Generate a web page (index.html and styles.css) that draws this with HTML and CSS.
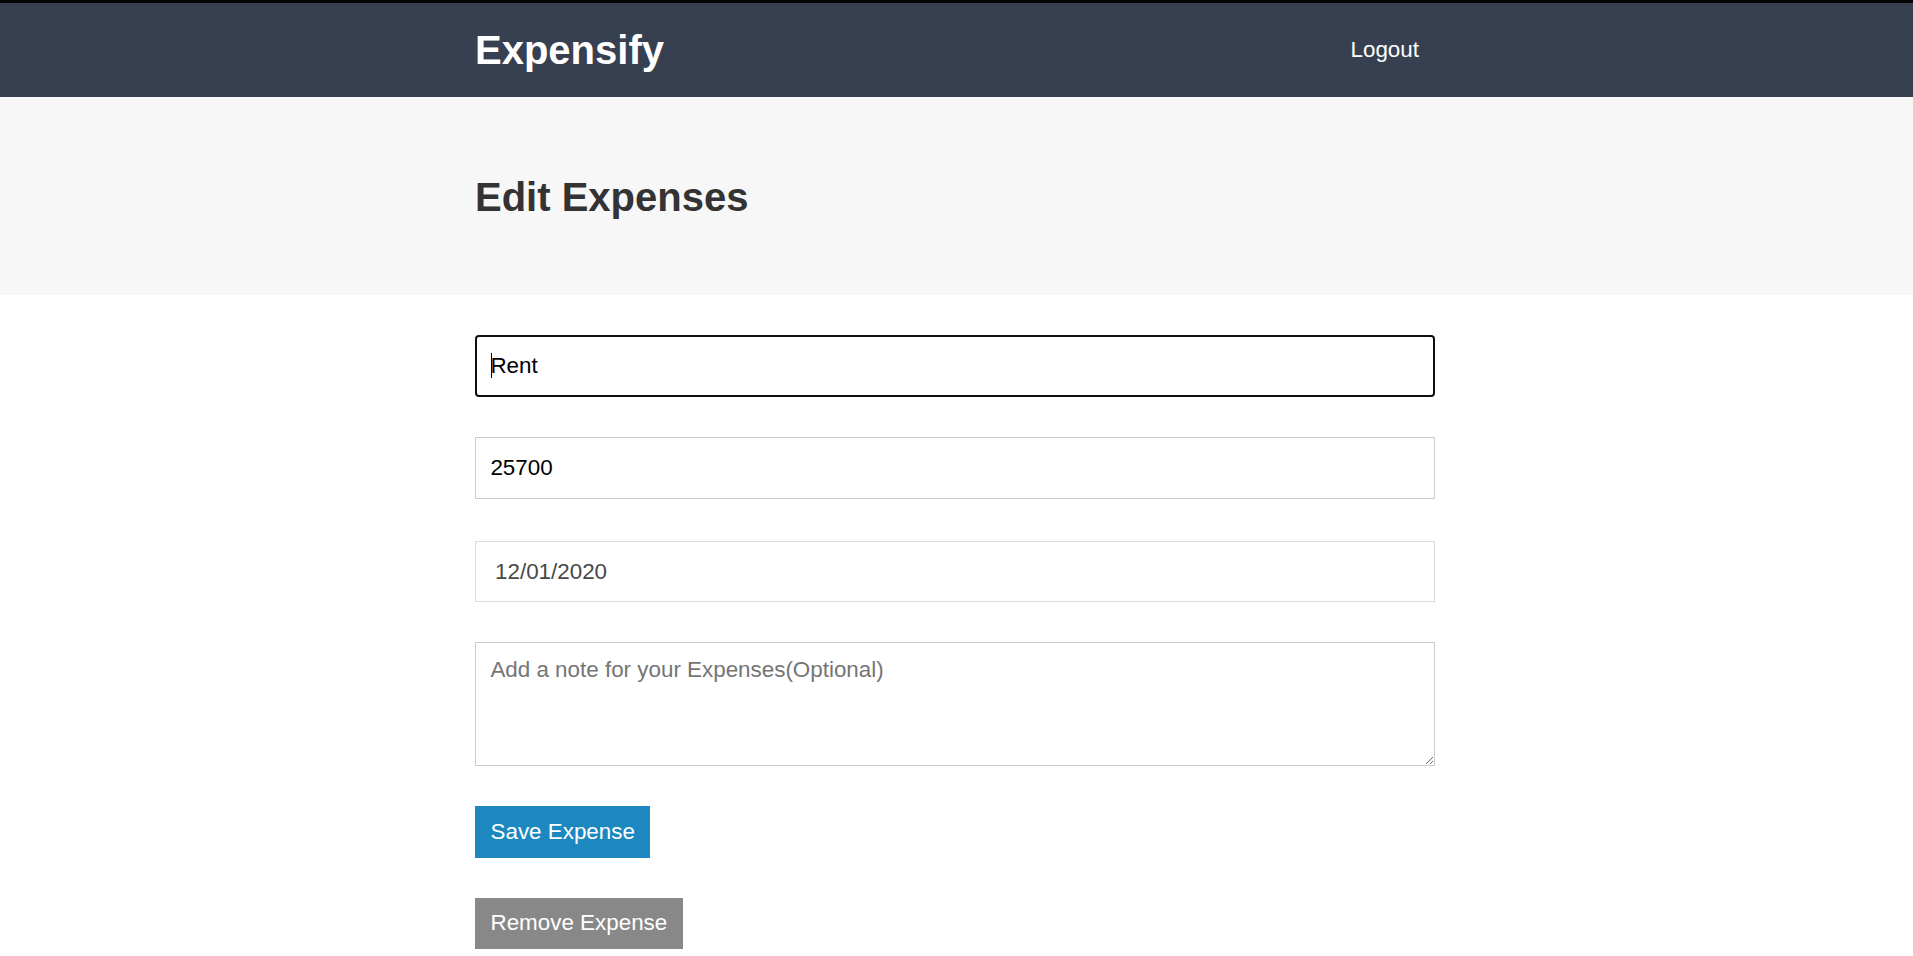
FILE: index.html
```html
<!DOCTYPE html>
<html lang="en">
<head>
<meta charset="utf-8">
<title>Expensify</title>
<link rel="stylesheet" href="styles.css">
</head>
<body>
<header class="header">
  <div class="container header__content">
    <a class="header__title" href="#"><h1>Expensify</h1></a>
    <button class="button-link" type="button">Logout</button>
  </div>
</header>
<div class="page-header">
  <div class="container">
    <h1 class="page-header__title">Edit Expenses</h1>
  </div>
</div>
<div class="container">
  <form class="form">
    <div class="field">
      <input class="text-input text-input--focused" type="text" placeholder="Description" value="Rent">
      <span class="caret"></span>
    </div>
    <input class="text-input" type="text" placeholder="Amount" value="25700">
    <div class="date-picker">
      <input class="date-picker__input" type="text" value="12/01/2020">
    </div>
    <textarea class="textarea" placeholder="Add a note for your Expenses(Optional)"></textarea>
    <div class="form__row">
      <button class="button" type="button">Save Expense</button>
    </div>
    <div class="form__row">
      <button class="button button--secondary" type="button">Remove Expense</button>
    </div>
  </form>
</div>
</body>
</html>
```
FILE: styles.css
```css
* {
  box-sizing: border-box;
}

html, body {
  margin: 0;
  padding: 0;
}

body {
  font-family: "Liberation Sans", Arial, sans-serif;
  color: #333333;
  background: #ffffff;
}

.container {
  width: 960px;
  margin-left: calc(50% - 481.5px);
  margin-right: auto;
}

.header {
  background: #364051;
  border-top: 3px solid #050505;
}

.header__content {
  height: 94px;
  display: flex;
  align-items: center;
  justify-content: space-between;
}

.header__title {
  color: #ffffff;
  text-decoration: none;
}

.header__title h1 {
  margin: 0;
  font-size: 40px;
  font-weight: 700;
  line-height: 46px;
}

.button-link {
  background: none;
  border: none;
  color: #ffffff;
  font-family: inherit;
  font-size: 22.4px;
  line-height: 1;
  padding: 0 16px;
  cursor: pointer;
}

.page-header {
  background: #f7f7f7;
  padding: 77px 0 75px;
  margin-bottom: 40px;
}

.page-header__title {
  margin: 0;
  font-size: 40px;
  font-weight: 700;
  line-height: 46px;
  color: #333333;
}

.form {
  display: flex;
  flex-direction: column;
  gap: 40px;
}

.field {
  position: relative;
}

.text-input {
  display: block;
  width: 100%;
  height: 62px;
  border: 1px solid #cacccd;
  padding: 0 14.4px;
  font-family: inherit;
  font-size: 22.4px;
  color: #000000;
  background: #ffffff;
  outline: none;
}

.text-input--focused {
  border: 2px solid #101010;
  border-radius: 4px;
  padding: 0 13.4px;
}

.caret {
  position: absolute;
  left: 16px;
  top: 18px;
  width: 1px;
  height: 25px;
  background: #000000;
}

.date-picker {
  margin-top: 2px;
  height: 61px;
  border: 1px solid #dbdbdb;
  background: #ffffff;
}

.date-picker__input {
  display: block;
  width: 100%;
  height: 100%;
  border: none;
  padding: 0 19px;
  font-family: inherit;
  font-size: 22.4px;
  color: #484848;
  background: transparent;
  outline: none;
}

.textarea {
  display: block;
  width: 100%;
  height: 124px;
  border: 1px solid #cacccd;
  padding: 14.4px;
  font-family: inherit;
  font-size: 22.4px;
  color: #000000;
  outline: none;
}

.textarea::placeholder {
  color: #757575;
}

.form__row {
  display: flex;
}

.button {
  background: #1c88bf;
  border: none;
  color: #ffffff;
  font-family: inherit;
  font-size: 22.4px;
  line-height: 1;
  padding: 14.6px 15.5px;
  cursor: pointer;
}

.button--secondary {
  background: #888888;
}
```
